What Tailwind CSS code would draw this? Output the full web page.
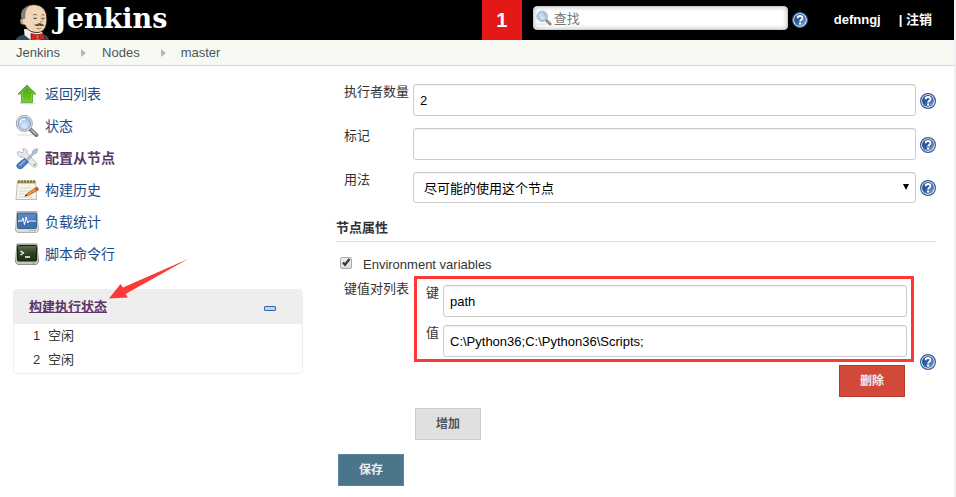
<!DOCTYPE html>
<html lang="zh-CN">
<head>
    <meta charset="UTF-8">
    <meta name="viewport" content="width=device-width, initial-scale=1.0">
    <title>master [Jenkins]</title>
    <script src="https://cdn.jsdelivr.net/npm/@tailwindcss/browser@4"></script>
</head>
<body class="min-h-screen bg-white border-r-2 border-[#f0f0f0] font-['Liberation_Sans','Noto_Sans_CJK_SC',sans-serif] text-[13px] leading-5 text-[#333]">
    <!-- shared icons -->
    <svg class="absolute size-0" aria-hidden="true">
        <defs>
            <linearGradient id="blue" x1="0" y1="0" x2="1" y2="1">
                <stop offset="0" stop-color="#1d4484"/><stop offset=".45" stop-color="#2f5a9c"/><stop offset="1" stop-color="#8fb0da"/>
            </linearGradient>
            <linearGradient id="green" x1="0" y1="0" x2="0" y2="1">
                <stop offset="0" stop-color="#4f9a1d"/><stop offset="1" stop-color="#6cd01c"/>
            </linearGradient>
            <linearGradient id="term" x1="0" y1="0" x2="0" y2="1">
                <stop offset="0" stop-color="#5b7050"/><stop offset=".5" stop-color="#2c4222"/><stop offset="1" stop-color="#1c3014"/>
            </linearGradient>
            <radialGradient id="lens" cx=".5" cy=".7" r=".7">
                <stop offset="0" stop-color="#dcebfb"/><stop offset="1" stop-color="#98bce6"/>
            </radialGradient>
        </defs>
        <symbol id="help" viewBox="0 0 16 16">
            <circle cx="8" cy="8" r="7.400" fill="#fff" stroke="#2f5a96" stroke-width="1.200"/>
            <circle cx="8" cy="8" r="6" fill="url(#blue)"/>
            <path d="M5.600 6.200C5.600 4.600 6.600 4 8 4s2.500.8 2.500 2.100C10.500 7.700 8.100 7.800 8.100 9.400" fill="none" stroke="#fff" stroke-width="1.800"/>
            <rect x="7.100" y="10.500" width="2" height="2" fill="#fff"/>
        </symbol>
        <symbol id="magnifier" viewBox="0 0 24 24">
            <ellipse cx="10" cy="21" rx="9" ry="1.500" fill="#000" opacity=".08"/>
            <path d="M15 15l6.300 6" stroke="#777" stroke-width="4" stroke-linecap="round"/>
            <path d="M16.500 16l4.500 4.200" stroke="#bbb" stroke-width="1.500" stroke-linecap="round"/>
            <circle cx="9.300" cy="9.500" r="8" fill="#eee" stroke="#999" stroke-width="1"/>
            <circle cx="9.300" cy="9.500" r="6.200" fill="url(#lens)" stroke="#6a8dbb" stroke-width=".8"/>
            <path d="M5.200 8.500c.5-2.500 2.500-3.700 5-3.200" fill="none" stroke="#fff" stroke-width="1.300"/>
        </symbol>
    </svg>

    <header class="flex h-10 bg-black text-white font-bold">
        <a href="#" class="flex pl-4">
            <svg class="w-9 h-9 mt-1" viewBox="0 0 36 36">
                <path d="M0 36c.5-3 3-4 8-5.500l17-1c4 .500 7 2.500 8 6.500z" fill="#2d4a5b"/>
                <path d="M8 25l.5 6 6 5h10l2.500-6-2-4z" fill="#f3f0ea"/>
                <path d="M7 9C8 3.500 13 .600 18 .700c7 .100 12 4.500 12.600 11.300.300 3 .600 6-.600 9.500-1.200 4-4 7-9 7-5.500 0-10-2.500-12-7.500-3 .300-5-1.200-5-4 0-1.800 1.500-2.700 2.800-2z" fill="#f0d6b7" stroke="#2b211c" stroke-width=".9"/>
                <path d="M6 15.500C4.500 12 4.500 7 8 4.500c2-1.800 4-3 7-3.500-3 2-5 4-5.500 8L9 15z" fill="#84807c"/>
                <path d="M6.500 16.500c-1.500.500-1 2.500.800 2.500" fill="none" stroke="#7b5540" stroke-width=".9"/>
                <path d="M17 11q2-1.600 4 .2M25.500 11.200q1.700-1.200 3 0" fill="none" stroke="#67513f" stroke-width=".8"/>
                <path d="M17.500 14q1.700 1.300 3.300 0M26 14q1.500 1.200 2.600 0" fill="none" stroke="#2b211c" stroke-width="1"/>
                <path d="M24.500 13.500q3 3.500 1.500 4.500h-2" fill="none" stroke="#b18361" stroke-width=".8"/>
                <path d="M18 20.500q3 .500 5-1.500 3 .200 5.500 2.500-3 1-5 0-3 1.800-5.500-1z" fill="#554a43"/>
                <path d="M20.500 24.300q2.500 1.200 5-.200" fill="none" stroke="#8d5c45" stroke-width=".8"/>
                <path d="M15 29.500l6 1.500 6.500-1.500 1 6.500-7-1-6.500 1z" fill="#d8251d" stroke="#6d1411" stroke-width=".7"/>
                <rect x="19.500" y="30.500" width="4" height="4.500" rx="1" fill="#ee4938" stroke="#7e1712" stroke-width=".6"/>
            </svg>
            <span class="pl-[2px] font-['DejaVu_Serif',serif] text-[27px] leading-[38px]">Jenkins</span>
        </a>
        <a href="#" class="ml-auto w-10 bg-[#e31918] text-center text-xl leading-10">1</a>
        <form class="relative ml-[11px] mt-[6px] w-[255px]">
            <svg class="absolute left-[3px] top-1 size-4"><use href="#magnifier"/></svg>
            <input type="text" aria-label="查找" placeholder="查找" class="block w-full h-6 rounded-sm border border-[#ccc] bg-white pl-5 text-[13px] font-normal text-black placeholder-[#777] shadow-[inset_0_0_5px_#bbb]">
        </form>
        <a href="#" aria-label="帮助" class="ml-1 mt-3"><svg class="size-4"><use href="#help"/></svg></a>
        <a href="#" class="ml-[26px] leading-10">defnngj</a>
        <span class="ml-[18px] mr-[22px] leading-10">| <a href="#">注销</a></span>
    </header>

    <nav class="flex h-[26px] items-center border-b border-[#d3d7cf] bg-[#f6faf2] pl-4 text-[#4d545d]">
        <a href="#">Jenkins</a>
        <svg class="ml-[21px] mr-4 w-[5px] h-2" viewBox="0 0 5 8"><path d="M0 0l5 4-5 4z" fill="#b5b8b2"/></svg>
        <a href="#">Nodes</a>
        <svg class="ml-[21px] mr-[15px] w-[5px] h-2" viewBox="0 0 5 8"><path d="M0 0l5 4-5 4z" fill="#b5b8b2"/></svg>
        <a href="#">master</a>
    </nav>

    <div class="flex">
        <aside class="relative w-[303px] shrink-0 pl-[13px] pt-3">
            <ul class="pl-[2px] text-sm text-[#204a87]">
                <li><a href="#" class="flex h-8 items-center gap-[6px]">
                    <svg class="size-6" viewBox="0 0 24 24">
                        <ellipse cx="12" cy="21" rx="8" ry="1.500" fill="#000" opacity=".15"/>
                        <path d="M12 3l9 9h-3.500v8.300h-11V12H3z" fill="url(#green)" stroke="#4b9a20" stroke-width=".8"/>
                        <path d="M12 4.800l6.500 6.300h-2v8.200h-9v-8.200h-2z" fill="none" stroke="#93d466" stroke-width=".6"/>
                    </svg>返回列表</a></li>
                <li><a href="#" class="flex h-8 items-center gap-[6px]">
                    <svg class="size-6"><use href="#magnifier"/></svg>状态</a></li>
                <li><a href="#" class="flex h-8 items-center gap-[6px] font-bold text-[#5c3566]">
                    <svg class="size-6" viewBox="0 0 24 24">
                        <path d="M4 5.500l3 1.500 2-1.500L7.500 3C10.500 2 12.800 4 12.300 7.500l9.200 9.500c1.700 2.500-1.300 5.500-3.900 3.500L8.500 11C5 12 2 9.500 2.500 6z" fill="#e9e9e9" stroke="#aaa" stroke-width=".8"/>
                        <circle cx="19.500" cy="18.800" r="1" fill="#888"/>
                        <path d="M11 13.500L17.500 7 18 4.500l4-2 .8 1-1.500 3.700-2.800 1L12.800 15z" fill="#b4c6d8" stroke="#8399ae" stroke-width=".7"/>
                        <path d="M9.500 12.500l4 3.700-6.500 6c-3 2-6.700-1.400-4.500-4.200z" fill="#4c80bd" stroke="#2a5590" stroke-width=".8"/>
                        <path d="M10 14.500l-5.500 5.200" stroke="#9cbde2" stroke-width="1.300"/>
                    </svg>配置从节点</a></li>
                <li><a href="#" class="flex h-8 items-center gap-[6px]">
                    <svg class="size-6" viewBox="0 0 24 24">
                        <path d="M2.500 3h18l1 18.500H1z" fill="#f5f5ef" stroke="#b8b7ae" stroke-width=".9"/>
                        <path d="M2.500 3h18v2.500h-18z" fill="#c9a63e"/>
                        <path d="M4 2v3M7 2v3M10 2v3M13 2v3M16 2v3M19 2v3" stroke="#5c4a26" stroke-width="1"/>
                        <path d="M4.500 10h12M4.300 13h8M4 16h6M4 19h14" stroke="#cfcfc8" stroke-width=".8"/>
                        <path d="M22 9l1.700 2.700-9.500 5.300-4 1 2.800-3.300z" fill="#e99a3b" stroke="#9e581d" stroke-width=".7"/>
                        <path d="M22 9l1.700 2.700-2.200 1.200-1.700-2.600z" fill="#d7493b"/>
                        <path d="M9.500 18.500l1.500-2 1.300 1.300z" fill="#222"/>
                    </svg>构建历史</a></li>
                <li><a href="#" class="flex h-8 items-center gap-[6px]">
                    <svg class="size-6" viewBox="0 0 24 24">
                        <path d="M2 1.500h20l1.500 19-2 2h-19l-2-2z" fill="#dcdcd6" stroke="#aaaca5" stroke-width=".9"/>
                        <rect x="2.500" y="3" width="19" height="15.500" rx="1" fill="#3e70b6" stroke="#254d87" stroke-width=".8"/>
                        <path d="M3 3.500h18v5q-9 1-18 4z" fill="#769bd0" opacity=".5"/>
                        <path d="M3 11h4l1-3 1.500 6.500 1.700-7.500 1.500 6 1-2h7.300" fill="none" stroke="#fff" stroke-width="1"/>
                        <path d="M14 20.500h1M16.500 20.500h1M19 20.500h1.500" stroke="#888" stroke-width="1"/>
                    </svg>负载统计</a></li>
                <li><a href="#" class="flex h-8 items-center gap-[6px]">
                    <svg class="size-6" viewBox="0 0 24 24">
                        <path d="M2 2h20l1.500 18-2 2.500h-19l-2-2.500z" fill="#c5c6c0" stroke="#85877f" stroke-width=".9"/>
                        <rect x="2.500" y="3.500" width="19" height="15.500" rx="1" fill="url(#term)" stroke="#171f12" stroke-width="1"/>
                        <path d="M5.500 9l3 2-3 2M10 15h5" fill="none" stroke="#fff" stroke-width="1.300"/>
                        <path d="M17.500 20.900h2" stroke="#75a951" stroke-width="1"/>
                    </svg>脚本命令行</a></li>
            </ul>

            <section class="mt-[19px] overflow-hidden rounded-sm border border-[#eee] pb-px">
                <div class="flex h-[34px] items-center justify-between bg-[#eee] pl-[15px] pr-[26px]">
                    <a href="#" class="font-bold text-[#5c3566] underline">构建执行状态</a>
                    <button type="button" aria-label="折叠" class="mt-[2px] h-[5px] w-3 rounded-[1px] border border-[#3465a4] bg-[#b9d3f2]"></button>
                </div>
                <table class="w-full">
                    <tbody>
                        <tr class="h-6"><td class="w-[34px] pl-[19px]">1</td><td>空闲</td></tr>
                        <tr class="h-6"><td class="w-[34px] pl-[19px]">2</td><td>空闲</td></tr>
                    </tbody>
                </table>
            </section>

            <!-- arrow laid over the panel -->
            <svg class="pointer-events-none absolute left-[109px] top-[193px] w-20 h-10" viewBox="0 0 80 40">
                <path d="M79 0L14 28.500 11.500 25 0 39.500l19-1-2.500-3.500z" fill="#fd3937"/>
            </svg>
        </aside>

        <form class="ml-[33px] mr-[18px] flex-1 pt-[18px]">
            <div class="flex pl-2">
                <label for="executors" class="w-[69px] leading-4">执行者数量</label>
                <input id="executors" type="text" value="2" class="h-8 flex-1 rounded-[3px] border border-[#ccc] px-[6px] text-black shadow-[inset_0_1px_1px_#eee]">
                <a href="#" aria-label="帮助" class="ml-1 mt-[9px]"><svg class="size-4"><use href="#help"/></svg></a>
            </div>
            <div class="mt-3 flex pl-2">
                <label for="labels" class="w-[69px] leading-4">标记</label>
                <input id="labels" type="text" class="h-8 flex-1 rounded-[3px] border border-[#ccc] px-[6px] text-black shadow-[inset_0_1px_1px_#eee]">
                <a href="#" aria-label="帮助" class="ml-1 mt-[9px]"><svg class="size-4"><use href="#help"/></svg></a>
            </div>
            <div class="mt-3 flex pl-2">
                <label for="usage" class="w-[69px] leading-4">用法</label>
                <div class="relative flex-1">
                    <select id="usage" class="block h-[31px] w-full appearance-none rounded-[3px] border border-[#ccc] bg-white px-[10px] pt-[2px] text-black shadow-[inset_0_1px_1px_#eee]">
                        <option>尽可能的使用这个节点</option>
                    </select>
                    <svg class="pointer-events-none absolute right-[7px] top-3 h-[6px] w-[6px]" viewBox="0 0 6 6"><path d="M0 0h6L3 6z" fill="#000"/></svg>
                </div>
                <a href="#" aria-label="帮助" class="ml-1 mt-2"><svg class="size-4"><use href="#help"/></svg></a>
            </div>

            <h2 class="mt-[15px] border-b border-[#ddd] pb-[3px] font-bold leading-5">节点属性</h2>

            <div class="mt-[13px] flex items-center pl-1">
                <input id="env" type="checkbox" checked class="-mt-1 size-3 appearance-none rounded-[2px] border border-[#aaa] bg-linear-to-b from-[#eee] to-[#ddd]">
                <svg class="pointer-events-none -ml-3 -mt-[6px] size-3" viewBox="0 0 12 12"><path d="M3 6.500l2 2.200L9.500 3" fill="none" stroke="#333" stroke-width="2.200"/></svg>
                <label for="env" class="pl-[11px]">Environment variables</label>
            </div>

            <div class="flex pl-2">
                <span class="w-[70px] pt-1 leading-5">键值对列表</span>
                <div class="mt-px flex-1">
                    <div class="mr-[2px] flex flex-col gap-2 border-3 border-[#fd3937] pt-[6px] pb-[2px] pl-[9px] pr-1">
                        <div class="flex">
                            <label for="key" class="w-[17px] leading-4">键</label>
                            <input id="key" type="text" value="path" class="h-8 flex-1 rounded-[3px] border border-[#ccc] px-[6px] text-black shadow-[inset_0_1px_1px_#eee]">
                        </div>
                        <div class="flex">
                            <label for="value" class="w-[17px] leading-4">值</label>
                            <input id="value" type="text" value="C:\Python36;C:\Python36\Scripts;" class="h-8 flex-1 rounded-[3px] border border-[#ccc] px-[6px] text-black shadow-[inset_0_1px_1px_#eee]">
                        </div>
                    </div>
                    <button type="button" class="ml-auto mr-[11px] mt-[3px] block h-8 w-[66px] border border-[#b7392b] bg-[#d24939] text-xs font-bold text-[#eee]">删除</button>
                    <button type="button" class="ml-px mt-[11px] block h-8 w-[66px] border border-[#ccc] bg-[#e0e0e0] text-xs font-bold text-[#4d545d]">增加</button>
                </div>
                <a href="#" aria-label="帮助" class="ml-1 mt-[79px]"><svg class="size-4"><use href="#help"/></svg></a>
            </div>

            <button type="submit" class="ml-[2px] mt-[14px] block h-8 w-[66px] border border-[#5788a0] bg-[#4b758b] text-xs font-bold text-[#eee]">保存</button>
        </form>
    </div>
</body>
</html>
